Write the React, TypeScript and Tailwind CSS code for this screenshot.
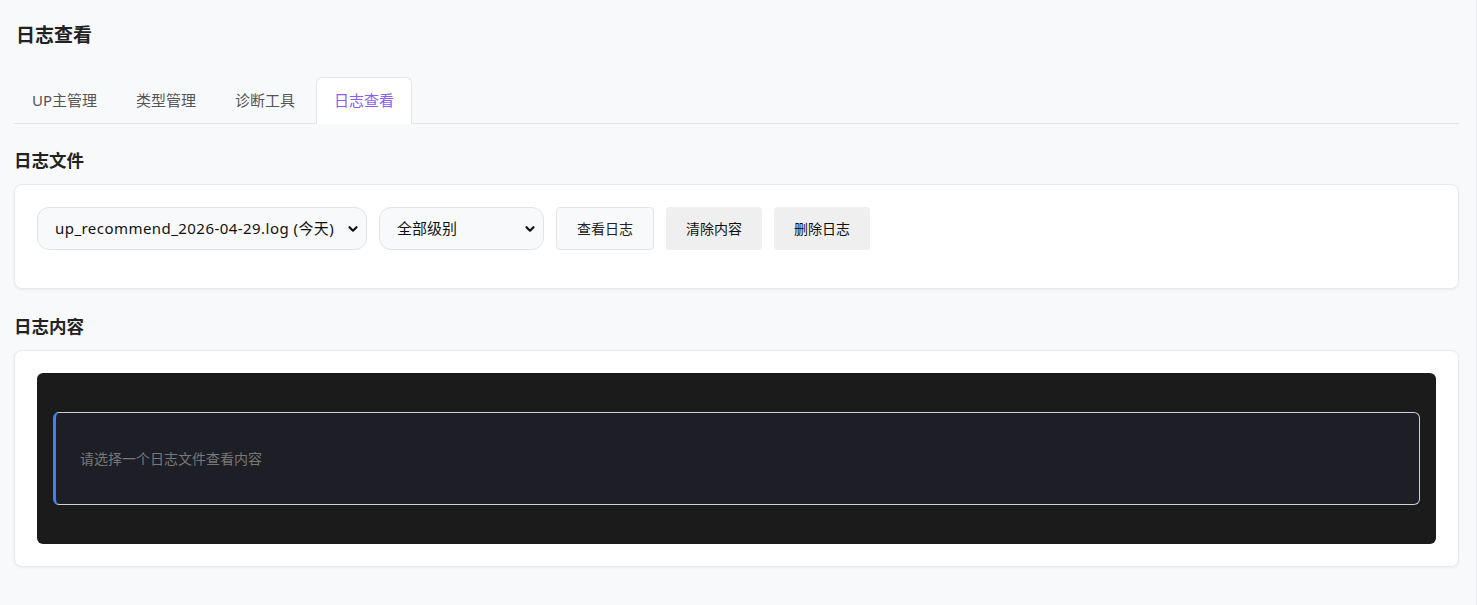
import React from "react";

const font = { fontFamily: '"Noto Sans", "Noto Sans CJK SC", sans-serif' };

function Chevron() {
  return (
    <svg className="pointer-events-none absolute right-[8px] top-1/2 -translate-y-1/2" width="12" height="12" viewBox="0 0 12 12">
      <path d="M2.5 4.2 L6 7.7 L9.5 4.2" fill="none" stroke="#111" strokeWidth="2.2" strokeLinecap="round" strokeLinejoin="round" />
    </svg>
  );
}

function SelectBox({ label, width, size }: { label: string; width: string; size: string }) {
  return (
    <div className={`relative ${width} h-[43px] shrink-0`}>
      <select
        className={`h-full w-full appearance-none rounded-[12px] border border-[#e1e3e8] bg-[#f8f9fb] pl-[17px] pr-7 ${size} text-[#111] outline-none`}
        style={font}
        defaultValue={label}
      >
        <option value={label}>{label}</option>
      </select>
      <Chevron />
    </div>
  );
}

export default function App() {
  const tabs = ["UP主管理", "类型管理", "诊断工具", "日志查看"];
  return (
    <div className="min-h-[605px] w-full bg-[#f8f9fb] border-r border-[#ebedf0]" style={font}>
      <div className="px-[14px] pt-[21px] pb-[38px] mr-[3px]">
        <h1 className="pl-[2px] text-[19px] leading-[28px] font-bold text-[#222]">日志查看</h1>

        <div className="mt-[28px] flex gap-[3px] border-b border-[#e3e5e9]">
          {tabs.map((t, i) => (
            <div
              key={t}
              className={
                i === 3
                  ? "-mb-px rounded-t-[6px] border border-b-0 border-[#e3e5e9] bg-white px-[17px] pt-[11px] pb-[13px] text-[15px] leading-[22px] text-[#8b5cf6]"
                  : "px-[18px] pt-[12px] pb-[12px] text-[15px] leading-[22px] text-[#555]"
              }
            >
              {t}
            </div>
          ))}
        </div>

        <h2 className="mt-[24px] text-[17.5px] leading-[24px] font-bold text-[#222]">日志文件</h2>
        <div className="mt-[12px] rounded-[8px] border border-[#e8eaee] bg-white p-[22px] shadow-[0_1px_3px_rgba(0,0,0,0.05)]">
          <div className="mb-[16px] flex items-center gap-[12px]">
            <SelectBox label="up_recommend_2026-04-29.log (今天)" width="w-[330px]" size="text-[15px] tracking-[0.45px]" />
            <SelectBox label="全部级别" width="w-[165px]" size="text-[15px]" />
            <button className="h-[43px] rounded-[4px] border border-[#e3e5e9] bg-[#f8f9fb] px-[20px] text-[14px] text-[#222]">查看日志</button>
            <button className="h-[43px] rounded-[4px] bg-[#efefef] px-[20px] text-[14px] text-[#111]">清除内容</button>
            <button className="h-[43px] rounded-[4px] bg-[#efefef] px-[20px] text-[14px] text-[#111]">删除日志</button>
          </div>
        </div>

        <h2 className="mt-[25px] text-[17.5px] leading-[24px] font-bold text-[#222]">日志内容</h2>
        <div className="mt-[12px] rounded-[8px] border border-[#e8eaee] bg-white p-[22px] shadow-[0_1px_3px_rgba(0,0,0,0.05)]">
          <div className="rounded-[6px] bg-[#1b1b1b] px-[16px] pt-[39px] pb-[39px]">
            <div className="rounded-[6px] border border-[#cfd0d4] border-l-[3px] border-l-[#3b82f6] bg-[#1e1f26] pl-[24px] py-[35px] text-[14px] leading-[21px] text-[#777]">
              请选择一个日志文件查看内容
            </div>
          </div>
        </div>
      </div>
    </div>
  );
}
